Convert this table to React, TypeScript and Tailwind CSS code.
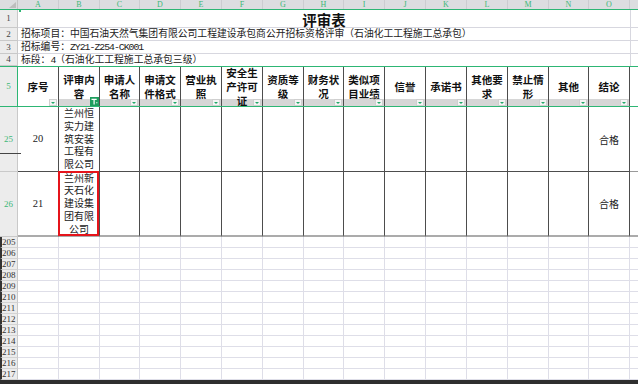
import React from "react";

const COLS = [41, 41, 40, 41, 41, 41, 41, 40, 41, 41, 41, 41, 41, 40, 41];
const LETTERS = "ABCDEFGHIJKLMNO".split("");
const W: Record<number, string> = { 41: "w-[41px]", 40: "w-[40px]" };
const HEADERS: string[][] = [
  ["序号"],
  ["评审内", "容"],
  ["申请人", "名称"],
  ["申请文", "件格式"],
  ["营业执", "照"],
  ["安全生", "产许可", "证"],
  ["资质等", "级"],
  ["财务状", "况"],
  ["类似项", "目业绩"],
  ["信誉"],
  ["承诺书"],
  ["其他要", "求"],
  ["禁止情", "形"],
  ["其他"],
  ["结论"],
];

const CJK = "font-['Noto_Sans_CJK_SC','Noto_Sans',sans-serif]";
const SERIF = "font-['Liberation_Serif',serif]";
const MONO = "font-['Liberation_Mono',monospace]";

function RowNum({ n, green, extra = "" }: { n: string; green?: boolean; extra?: string }) {
  return (
    <div
      className={`w-[18px] shrink-0 relative bg-[#ececec] border-r border-b border-[#c9c9c9] flex items-center justify-center text-[9px] leading-none ${SERIF} ${
        green ? "text-[#3cb878]" : "text-[#444]"
      } ${extra}`}
    >
      {n}
    </div>
  );
}

function ColHeader() {
  return (
    <div className="flex h-[10px] shrink-0 bg-[#dcdde0] border-b border-[#2db674]">
      <div className="w-[18px] shrink-0 relative border-r border-[#c4c4c4]">
        <div className="absolute right-[1px] bottom-[1px] w-0 h-0 border-l-[7px] border-l-transparent border-b-[6px] border-b-[#bdbdbd]" />
      </div>
      {COLS.map((w, i) => (
        <div
          key={i}
          className={`${W[w]} shrink-0 border-r border-[#cbccd0] flex items-center justify-center text-[8px] leading-none text-[#3cb878] ${SERIF}`}
        >
          {LETTERS[i]}
        </div>
      ))}
      <div className="flex-1" />
    </div>
  );
}

function TopRow({
  n,
  h,
  children,
  noBottom,
  inner = "",
}: {
  n: string;
  h: string;
  children?: React.ReactNode;
  noBottom?: boolean;
  inner?: string;
}) {
  const b = noBottom ? "" : "border-b border-[#d7d7df]";
  return (
    <div className={`flex ${h} shrink-0`}>
      <RowNum n={n} />
      <div className={`w-[612px] shrink-0 ${b} flex items-center overflow-visible whitespace-nowrap ${inner}`}>{children}</div>
      <div className={`flex-1 border-l border-[#d7d7df] ${b}`} />
    </div>
  );
}

function FilterBtn({ active }: { active?: boolean }) {
  if (active) {
    return (
      <div className="absolute right-0 bottom-0 w-[9px] h-[9px] bg-[#1e9e5e] flex items-center justify-center z-20">
        <svg width="7" height="7" viewBox="0 0 7 7">
          <path d="M0.5 0.8h5.2v1.2h-2v4.4h-1.2v-4.4h-2z" fill="#fff" />
          <path d="M5.2 4.2h1.2v1h-1.2z" fill="#fff" />
        </svg>
      </div>
    );
  }
  return (
    <div className="absolute right-[1px] bottom-0 w-[8px] h-[7px] bg-[#f4f4f4] border border-[#cfcfcf] flex items-center justify-center z-20">
      <div className="w-0 h-0 border-l-[2px] border-r-[2px] border-t-[2px] border-l-transparent border-r-transparent border-t-[#22a868]" />
    </div>
  );
}

function HeaderRow() {
  return (
    <div className="flex h-[41px] shrink-0 border-t border-b border-[#2db674]">
      <RowNum n="5" green extra="border-b-0 border-r-[#2db674]" />
      {COLS.map((w, i) => (
        <div
          key={i}
          className={`${W[w]} shrink-0 relative border-r border-[#4d4d4d] flex items-center justify-center overflow-hidden`}
        >
          {i > 0 && <div className="absolute inset-x-0 bottom-0 h-[7px] bg-[#d6d6d6]" />}
          <div className={`relative z-10 text-[10.5px] leading-[14px] font-bold text-center text-[#111] ${CJK}`}>
            {HEADERS[i].map((l, k) => (
              <div key={k}>{l}</div>
            ))}
          </div>
          <FilterBtn active={i === 1} />
        </div>
      ))}
      <div className="flex-1" />
    </div>
  );
}

function DataRow({
  n,
  num,
  company,
  red,
  last,
}: {
  n: string;
  num: string;
  company: string;
  red?: boolean;
  last?: boolean;
}) {
  const bb = last ? "border-b-2 border-b-[#ababab]" : "border-b border-b-[#4d4d4d]";
  return (
    <div className="flex h-[65px] shrink-0">
      <RowNum n={n} green />
      {COLS.map((w, i) => (
        <div key={i} className={`${W[w]} shrink-0 relative border-r border-r-[#4d4d4d] ${bb} flex items-center justify-center`}>
          {i === 0 && <span className={`text-[10.5px] text-[#222] ${SERIF}`}>{num}</span>}
          {i === 1 && (
            <div className={`w-[31px] text-center text-[10px] leading-[12.8px] break-all text-[#222] ${CJK}`}>{company}</div>
          )}
          {i === 14 && <span className={`text-[10px] text-[#222] ${CJK}`}>合格</span>}
          {i === 1 && red && <div className="absolute -left-[1px] -top-[1px] right-0 -bottom-[1px] border-2 border-[#e5141b] z-10" />}
        </div>
      ))}
      <div className={`flex-1 ${last ? "border-b-2 border-b-[#ababab]" : "border-b border-b-[#9a9a9a]"}`} />
    </div>
  );
}

function EmptyRow({ n }: { n: number }) {
  return (
    <div className="flex h-[11px] shrink-0">
      <div
        className={`w-[18px] shrink-0 bg-[#ececec] border-l-2 border-l-[#333] border-r border-b border-r-[#c9c9c9] border-b-[#d3d3d3] flex items-center text-[9px] leading-none text-[#333] ${SERIF}`}
      >
        {n}
      </div>
      {COLS.map((w, i) => (
        <div key={i} className={`${W[w]} shrink-0 border-r border-b border-[#dedee8]`} />
      ))}
      <div className="flex-1 border-b border-[#dedee8]" />
    </div>
  );
}

export default function App() {
  const empties = Array.from({ length: 13 }, (_, i) => 205 + i);
  return (
    <div className={`w-[638px] h-[384px] overflow-hidden bg-white flex flex-col relative ${CJK}`}>
      <ColHeader />
      <TopRow n="1" h="h-[18px]" inner="justify-center pt-[1px]">
        <span className={`text-[14.5px] font-bold leading-[15px] text-[#111] ${CJK}`}>评审表</span>
      </TopRow>
      <TopRow n="2" h="h-[13px]" inner="pl-[3px]">
        <span className="text-[9.8px] leading-none text-[#222]">
          招标项目：中国石油天然气集团有限公司工程建设承包商公开招标资格评审（石油化工工程施工总承包）
        </span>
      </TopRow>
      <TopRow n="3" h="h-[13px]" inner="pl-[3px]">
        <span className="text-[9.8px] leading-none text-[#222]">
          招标编号：<span className={`${MONO} tracking-[-1px]`}>ZY21-Z254-CK001</span>
        </span>
      </TopRow>
      <TopRow n="4" h="h-[12px]" noBottom inner="pl-[3px]">
        <span className="text-[9.8px] leading-none text-[#222]">
          标段：<span className={`${MONO} tracking-[-1px]`}>4</span>（石油化工工程施工总承包三级）
        </span>
      </TopRow>
      <HeaderRow />
      <div className="relative">
        <DataRow n="25" num="20" company="兰州恒实力建筑安装工程有限公司" />
        <div className="absolute left-0 top-[46px] w-[21px] h-[1px] bg-[#444] z-20" />
      </div>
      <DataRow n="26" num="21" company="兰州新天石化建设集团有限公司" red last />
      {empties.map((n) => (
        <EmptyRow key={n} n={n} />
      ))}
      <div className="flex-1 bg-[#2e2e2e]" />
      <div className="absolute left-[19px] top-[10px] w-[2px] h-[2px] bg-[#2db674]" />
    </div>
  );
}
